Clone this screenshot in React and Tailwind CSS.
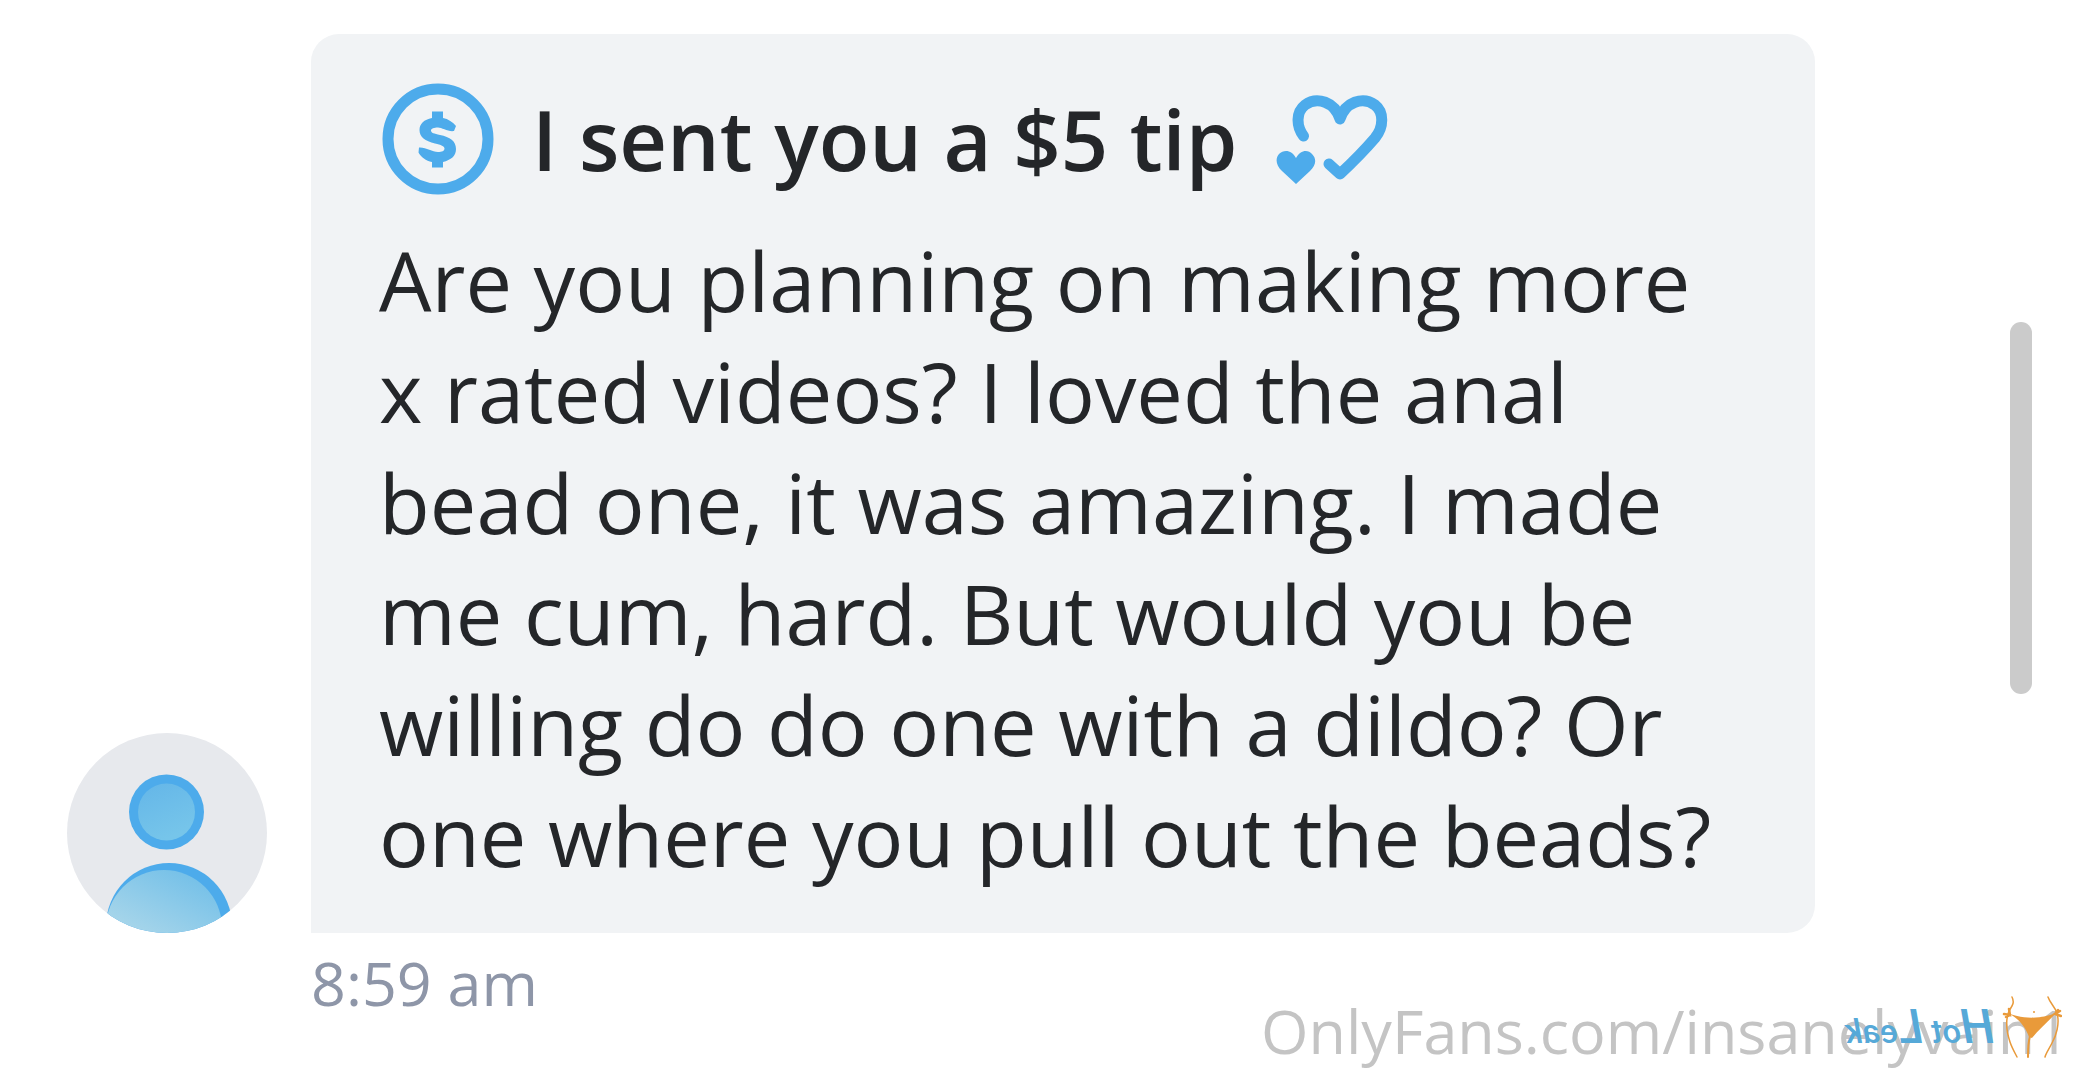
function TipIcon() {
  return (
    <svg viewBox="0 0 112 112" className="size-28 shrink-0" fill="none" aria-hidden="true">
      <circle cx="56" cy="56" r="50" stroke="#4dabeb" strokeWidth="11" />
      <path
        d="M50 28.500H61V35C66 36 71 39 74 43L72 48C66 49 60 44.500 56 44.500C52 44.500 49 45.500 49 47.500C49 50 52 50.500 58 52C68 54 74 58 74 66C74 73 69 77 61 79V84.500H50V79C44 78 39 74 36.500 69.500L37 64.500C44 64 50 69 56 69C60 69 62.500 68 62.500 65.500C62.500 63 59 62 53 60.500C43 58 37.500 54 37.500 47C37.500 41 42 36.500 50 35Z"
        fill="#4dabeb"
      />
    </svg>
  );
}

function HeartsIcon() {
  return (
    <svg viewBox="0 0 112 90" className="h-[90px] w-28 shrink-0" fill="none" aria-hidden="true">
      <path
        d="M27.500 42C20 32 20 18 29 11C41 2 59 8 64 25C69 8 87 2 99 11C108 18 108 33 99 44C93 51 78 67 64 80L53 70"
        stroke="#4dabeb"
        strokeWidth="11"
        strokeLinecap="round"
        strokeLinejoin="round"
      />
      <path
        d="M20 90L6 77C0 71 -1 65 3 60C8 55 16 56 20 64C24 56 32 55 36 60C41 65 40 71 34 77Z"
        fill="#4dabeb"
      />
    </svg>
  );
}

function Avatar() {
  return (
    <svg viewBox="0 0 200 200" className="size-[200px] shrink-0" role="img" aria-label="User avatar">
      <defs>
        <linearGradient id="head" x1="0" y1="0" x2="0.4" y2="1">
          <stop offset="0" stopColor="#64b6e8" />
          <stop offset="1" stopColor="#76c5ea" />
        </linearGradient>
        <linearGradient id="body" x1="0.7" y1="0" x2="0.4" y2="0.6">
          <stop offset="0" stopColor="#74c0e8" />
          <stop offset="1" stopColor="#a6d5ea" />
        </linearGradient>
        <clipPath id="disc">
          <circle cx="100" cy="100" r="100" />
        </clipPath>
      </defs>
      <g clipPath="url(#disc)">
        <rect width="200" height="200" fill="#e7e9ed" />
        <circle cx="99.500" cy="79" r="37.500" fill="#4dabeb" />
        <circle cx="99.500" cy="79" r="28.500" fill="url(#head)" />
        <circle cx="102" cy="193" r="63" fill="#4dabeb" />
        <circle cx="97" cy="195" r="58" fill="url(#body)" />
      </g>
    </svg>
  );
}

function BikiniLogo() {
  return (
    <svg viewBox="0 0 60 64" className="h-16 w-[60px]" fill="none" aria-hidden="true">
      <g stroke="#e99a3a" strokeWidth="1.500" strokeLinecap="round">
        <path d="M10 2C13 8 10 11 7 16C3 26 5 38 8 47C10 53 13 58 15 62" />
        <path d="M46 2C48 8 53 12 55 18C58 29 54 41 50 48C47 54 44 58 43 62" />
        <path d="M28 41C26 48 26 54 26 62" strokeWidth="2" />
        <path d="M2 19L8 20L7 14M8 20L4 22M58 16L53 19L59 21M53 19L56 15" strokeWidth="2.500" />
      </g>
      <path d="M8 19C22 24 39 24 54 18C47 26 37 34 30 43L27 42C24 33 18 25 8 19Z" fill="#e99a3a" />
      <circle cx="32" cy="17" r="1" fill="#e99a3a" />
    </svg>
  );
}

export default function App() {
  return (
    <main className="relative flex min-h-screen items-start overflow-hidden bg-white pl-[67px] pr-[50px] font-['Open_Sans',sans-serif]">
      <article className="grid min-w-0 flex-1 grid-cols-[200px_minmax(0,1504px)] gap-x-11 pt-[34px]">
        <div className="flex items-end">
          <Avatar />
        </div>
        <section className="rounded-[28px] rounded-bl-none bg-[#f1f3f5] px-[68px] pb-[43px] pt-[49px] text-[#242629]">
          <header className="mb-[29px] ml-[3px] flex h-[112px] items-center">
            <TipIcon />
            <h1 className="ml-[38px] mr-[39px] whitespace-nowrap text-[83px] font-semibold leading-[112px]">
              I sent you a $5 tip
            </h1>
            <HeartsIcon />
          </header>
          <p className="text-[83px] leading-[111px]">
            Are you planning on making more
            <br />x rated videos? I loved the anal
            <br />
            bead one, it was amazing. I made
            <br />
            me cum, hard. But would you be
            <br />
            willing do do one with a dildo? Or
            <br />
            one where you pull out the beads?
          </p>
        </section>
        <time className="col-start-2 mt-[10px] text-[61px] leading-20 text-[#8e96a8]">8:59 am</time>
      </article>
      <div className="mt-[322px] h-[372px] w-[22px] rounded-full bg-[#cbcbcb]" />
      <footer className="absolute bottom-2 right-3 text-[61px] leading-20 text-[#c4c4c4]">
        OnlyFans.com/insanelyvain1
        <div className="absolute bottom-3 right-2 flex items-end">
          <span className="mr-2 -scale-x-100 whitespace-nowrap font-['Roboto',sans-serif] text-[34px] font-medium italic leading-14 text-[#56a9d8]">
            <span className="text-[48px]">H</span>ot <span className="text-[48px]">L</span>eak
          </span>
          <BikiniLogo />
        </div>
      </footer>
    </main>
  );
}
